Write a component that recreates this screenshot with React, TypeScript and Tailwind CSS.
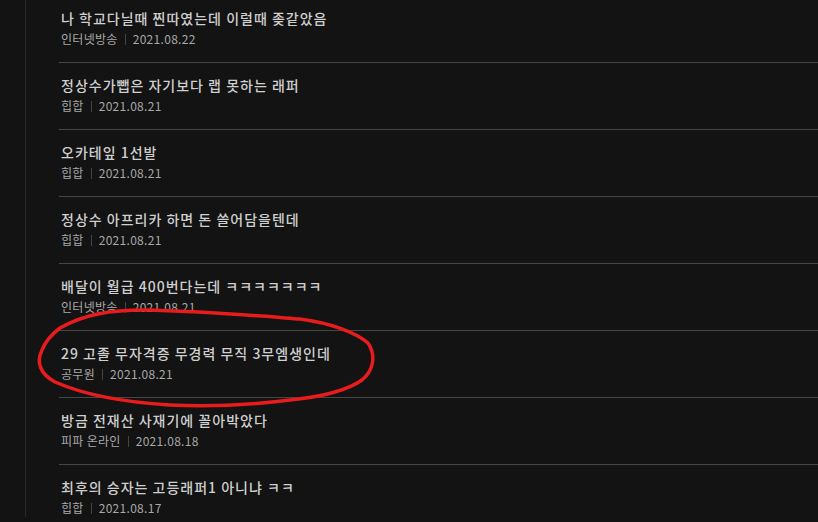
import React from 'react';

type Post = {
  title: string;
  category: string;
  date: string;
};

const posts: Post[] = [
  { title: '나 학교다닐때 찐따였는데 이럴때 좆같았음', category: '인터넷방송', date: '2021.08.22' },
  { title: '정상수가뺍은 자기보다 랩 못하는 래퍼', category: '힙합', date: '2021.08.21' },
  { title: '오카테잎 1선발', category: '힙합', date: '2021.08.21' },
  { title: '정상수 아프리카 하면 돈 쓸어담을텐데', category: '힙합', date: '2021.08.21' },
  { title: '배달이 월급 400번다는데 ㅋㅋㅋㅋㅋㅋㅋ', category: '인터넷방송', date: '2021.08.21' },
  { title: '29 고졸 무자격증 무경력 무직 3무엠생인데', category: '공무원', date: '2021.08.21' },
  { title: '방금 전재산 사재기에 꼴아박았다', category: '피파 온라인', date: '2021.08.18' },
  { title: '최후의 승자는 고등래퍼1 아니냐 ㅋㅋ', category: '힙합', date: '2021.08.17' },
];

const PostRow: React.FC<{ post: Post; first: boolean }> = ({ post, first }) => (
  <li className={first ? 'pt-[13px] pb-[14px]' : 'border-t border-[#464646] pt-[12px] pb-[14px]'}>
    <div className="px-[2px] h-[20px] leading-[20px] text-[14px] font-medium tracking-[1px] text-[#cfcfcf] whitespace-nowrap">
      {post.title}
    </div>
    <div className="mt-[2px] px-[2px] h-[18px] flex items-center text-[12px] tracking-[0.3px] text-[#a8a8a8] whitespace-nowrap">
      <span>{post.category}</span>
      <span className="mx-[7px] w-px h-[11px] bg-[#444]" />
      <span>{post.date}</span>
    </div>
  </li>
);

export default function App() {
  return (
    <div
      className="relative w-[818px] h-[522px] overflow-hidden bg-[#131313]"
      style={{ fontFamily: '"Noto Sans CJK KR", "Noto Sans", sans-serif' }}
    >
      <div className="ml-[25px] h-full border-l border-[#2a2a2a] pl-[33px]">
        <ul className="-mt-[5px]">
          {posts.map((p, i) => (
            <PostRow key={i} post={p} first={i === 0} />
          ))}
        </ul>
      </div>

      {/* hand-drawn highlight around one post */}
      <svg className="absolute left-0 top-0 pointer-events-none" width="818" height="522">
        <path
          d="M60 328 C 85 314, 110 310, 145 310 C 200 311, 260 316, 300 319 C 330 323, 355 332, 368 343 C 376 355, 374 370, 362 380 C 345 392, 320 397, 290 400 C 250 405, 210 407, 170 405 C 120 402, 80 393, 55 382 C 40 374, 36 362, 42 350 C 46 340, 52 334, 60 328"
          fill="none"
          stroke="#e81c1c"
          strokeWidth="3.5"
          strokeLinecap="round"
          strokeLinejoin="round"
        />
      </svg>
    </div>
  );
}
